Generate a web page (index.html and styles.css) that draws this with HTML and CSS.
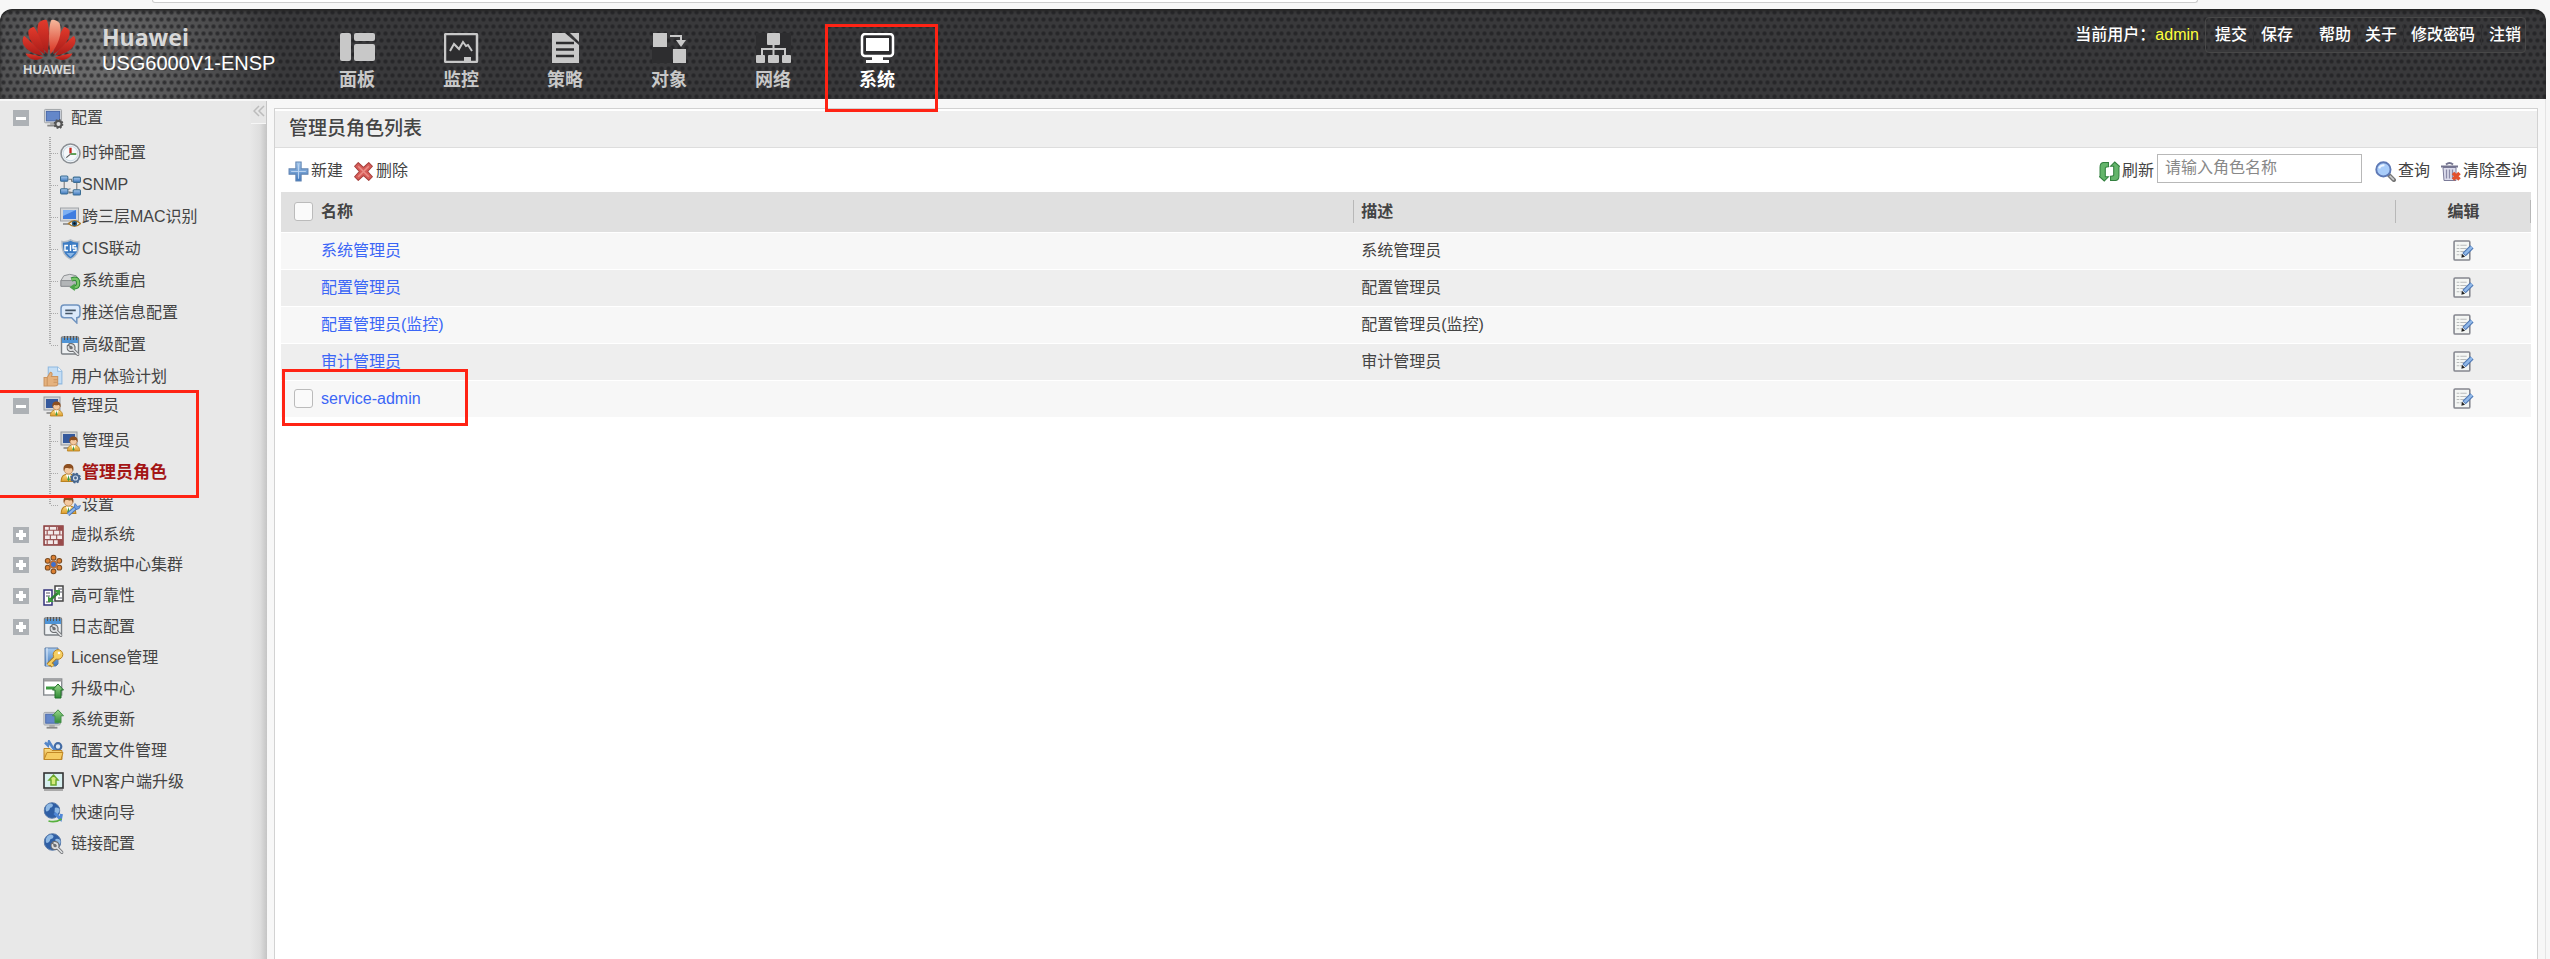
FILE: index.html
```html
<!DOCTYPE html>
<html lang="zh-CN">
<head>
    <meta charset="UTF-8">
    <meta name="viewport" content="width=device-width, initial-scale=1.0">
    <title>USG6000V1-ENSP</title>
    <link rel="stylesheet" href="styles.css">
</head>
<body>
    <!-- Icon sprite -->
    <svg class="sprite" aria-hidden="true">
        <defs>
            <linearGradient id="petal" x1="0" y1="0" x2="0" y2="1"><stop offset="0" stop-color="#e23a2c"/><stop offset="1" stop-color="#a81c18"/></linearGradient>
            <linearGradient id="petalLight" x1="0" y1="0" x2="0" y2="1"><stop offset="0" stop-color="#f6b89c"/><stop offset="1" stop-color="#d8301f"/></linearGradient>
            <linearGradient id="blue" x1="0" y1="0" x2="0" y2="1"><stop offset="0" stop-color="#a9cbee"/><stop offset="1" stop-color="#3f78bd"/></linearGradient>
            <linearGradient id="green" x1="0" y1="0" x2="0" y2="1"><stop offset="0" stop-color="#9bd98b"/><stop offset="1" stop-color="#2f8a35"/></linearGradient>
            <linearGradient id="gold" x1="0" y1="0" x2="0" y2="1"><stop offset="0" stop-color="#fbe08a"/><stop offset="1" stop-color="#dd9c2b"/></linearGradient>
        </defs>
        <symbol id="screen" viewBox="0 0 20 20">
            <rect x="1" y="1" width="18" height="14" rx="1" fill="#d9dbdd" stroke="#9da1a5"/>
            <rect x="3" y="3" width="14" height="10" fill="#6487c9" stroke="#4766a8"/>
            <path d="M7 15h6v2H7z" fill="#aaa"/><path d="M4 18h12" stroke="#888" stroke-width="2"/>
        </symbol>
        <symbol id="gear" viewBox="0 0 10 10">
            <circle cx="5" cy="5" r="3" fill="#ddd" stroke="#555" stroke-width="2"/>
            <circle cx="5" cy="5" r="4" fill="none" stroke="#555" stroke-width="2" stroke-dasharray="1.6 1.54"/>
        </symbol>
        <symbol id="wrench" viewBox="0 0 12 12">
            <path d="M10.500 10.500L6 6M3 1.500L5 3.500 3.500 5 1.500 3Q1 6 3.500 6.800 7.500 7.500 6.800 3.500 6 1 3 1.500z" fill="#d0d2d4" stroke="#6d6f72" stroke-width="3" stroke-linejoin="round" stroke-linecap="round"/>
            <path d="M10.500 10.500L6 6M1.800 3.500Q1.500 6 3.800 6.500 7 6.800 6.500 3.800 6 1.800 3.500 1.800" fill="none" stroke="#dcdee0" stroke-width="1.600" stroke-linecap="round"/>
        </symbol>
        <symbol id="person" viewBox="0 0 16 18">
            <path d="M1 17c0-5 3-7 7-7s7 2 7 7z" fill="url(#gold)" stroke="#b98222"/>
            <path d="M5.500 10.500L8 16l2.500-5.500z" fill="#fff"/><path d="M8 11l1 4-1 2-1-2z" fill="#3d9a45"/>
            <circle cx="8" cy="6" r="4" fill="#f4c9a0" stroke="#a86d35" stroke-width=".6"/>
            <path d="M3.500 7C2.500 2 5 .5 8 .5S13.500 2 12.500 7L11 4.500C8 5 5.500 4 5 4.500z" fill="#8d4f20"/>
        </symbol>
        <symbol id="i-config" viewBox="0 0 20 21"><use href="#screen" width="19" height="20"/><use href="#gear" x="10" y="11" width="10" height="10"/></symbol>
        <symbol id="i-clock" viewBox="0 0 20 20">
            <circle cx="10" cy="10" r="9" fill="#f5f8fa" stroke="#8a8f94" stroke-width="1.500"/>
            <circle cx="10" cy="10" r="7" fill="none" stroke="#cfdce6"/>
            <path d="M10 10V4.500" stroke="#c22820" stroke-width="2.200"/><path d="M10 10.500h5.500" stroke="#45913c" stroke-width="1.600"/><path d="M10 10.500L6 14" stroke="#555"/>
        </symbol>
        <symbol id="i-snmp" viewBox="0 0 20 20">
            <path d="M4 6v8M16 7v8M8 4h3v2h3M8 17h3M6 14l4-1M8 16l5 1" stroke="#777" fill="none"/>
            <g fill="url(#blue)" stroke="#3b6d93"><rect x=".5" y="1" width="7" height="5" rx="1"/><rect x="12.500" y="2" width="7" height="5" rx="1"/><rect x=".5" y="13" width="7" height="5" rx="1"/><rect x="12.500" y="14" width="7" height="5" rx="1"/></g>
        </symbol>
        <symbol id="i-mac" viewBox="0 0 21 21">
            <rect x=".5" y="1" width="18" height="13" fill="#d5d7da" stroke="#a0a3a7"/><rect x="3" y="3" width="13" height="9" fill="#3f7de0"/><path d="M3 3h13L3 9z" fill="#7db0f3"/>
            <path d="M3 17h7" stroke="#999" stroke-width="2"/>
            <path d="M8.500 16.500Q14.500 11 20.500 16.500 14.500 22 8.500 16.500z" fill="#fff" stroke="#ad7c2c" stroke-width="1.500"/><circle cx="14.500" cy="16.500" r="2.700" fill="#2c5f84"/><circle cx="14.500" cy="16.500" r="1.200" fill="#111"/>
        </symbol>
        <symbol id="i-shield" viewBox="0 0 20 21">
            <path d="M10 .8C7.500 2.500 4 3 1.500 2.500c0 8 1 14 8.500 17.700C17.500 16.500 18.500 10.500 18.500 2.500 16 3 12.500 2.500 10 .8z" fill="#3c7cc4" stroke="#b3bcc6" stroke-width="1.500"/>
            <path d="M7.500 6.500H4.500v5h3M10 6v6M15.500 6.500h-3v2.500h3v2.500h-3" fill="none" stroke="#fff" stroke-width="1.400"/><path d="M6 14h8l-4 4z" fill="#8db8e6"/>
        </symbol>
        <symbol id="i-restart" viewBox="0 0 22 20">
            <path d="M1 9l3-5q6-3 13 0l3 5v6H1z" fill="#d8d9da" stroke="#8b8e91"/><path d="M1 9h18v6H1z" fill="#b2b5b7" stroke="#8b8e91"/>
            <path d="M12 8q7-3 7 4 0 4-4 4" fill="none" stroke="#2e8436" stroke-width="4.500"/><path d="M12 8q7-3 7 4 0 4-4 4" fill="none" stroke="#76c566" stroke-width="2.500"/><path d="M15.500 12v8L10 16z" fill="#4aa348"/>
        </symbol>
        <symbol id="i-message" viewBox="0 0 20 20">
            <path d="M4 2h12q3 0 3 3v6q0 3-3 3v5l-5-5H4q-3 0-3-3V5q0-3 3-3z" fill="#dceafb" stroke="#6f93bf" stroke-width="1.400"/><path d="M5 7h10M5 10h7" stroke="#456" stroke-width="1.600"/>
        </symbol>
        <symbol id="i-advanced" viewBox="0 0 20 21">
            <rect x="1" y="2" width="17" height="17" rx="1" fill="#eef1f3" stroke="#7a7f84" stroke-width="1.400"/><path d="M1.500 3h16v5h-16z" fill="#4f94d6"/><path d="M4 1v4M7 1v4M10 1v4M13 1v4M16 1v4" stroke="#555"/>
            <use href="#wrench" x="6" y="8" width="13" height="13"/>
        </symbol>
        <symbol id="i-thumb" viewBox="0 0 20 20">
            <path d="M5 1h9l4 4v12H5z" fill="#c4def5" stroke="#8eb8df"/><path d="M14 1v4h4" fill="#fff" stroke="#8eb8df"/>
            <path d="M1 11h3l3-5c2 0 2 2 1 4h6v8q-1 1-3 1H1z" fill="#e5b27e" stroke="#cb9460"/><path d="M4 11v8M10 13h4M10 15.500h4" stroke="#cb9460"/>
        </symbol>
        <symbol id="i-admin" viewBox="0 0 20 21">
            <rect x=".5" y="1" width="16" height="13" fill="#d4d6d9" stroke="#94989d"/><rect x="2.500" y="3" width="12" height="9" fill="#35599d"/><path d="M3 17h7" stroke="#999" stroke-width="2"/>
            <use href="#person" x="6" y="5" width="14" height="16"/>
        </symbol>
        <symbol id="i-role" viewBox="0 0 21 20">
            <use href="#person" x="0" y="0" width="17" height="19"/>
            <circle cx="15.500" cy="14.500" r="3.600" fill="#cfdcec" stroke="#47678f" stroke-width="2"/><circle cx="15.500" cy="14.500" r="4.700" fill="none" stroke="#47678f" stroke-width="1.400" stroke-dasharray="2 1.690"/><circle cx="15.500" cy="14.500" r="1.400" fill="#47678f"/>
        </symbol>
        <symbol id="i-setting" viewBox="0 0 21 20">
            <use href="#person" x="0" y="0" width="17" height="19"/>
            <path d="M8 19l8-7" stroke="#4474bd" stroke-width="4"/><path d="M8 19l8-7" stroke="#8fb7ea" stroke-width="2"/><path d="M15 8q-2 4 1 6 4 0 4.500-4l-3 1z" fill="#6d9ce0" stroke="#4474bd" stroke-width=".8"/>
        </symbol>
        <symbol id="i-wall" viewBox="0 0 20 20">
            <rect x="1" y="1" width="18" height="18" fill="#f3eaea" stroke="#8b3d3d" stroke-width="1.500"/>
            <path d="M1 5h18M1 9.500h18M1 14h18M6 1v4M13 1v4M4 5v4.500M10 5v4.500M16 5v4.500M7 9.500V14M13 9.500V14M4 14v5M10 14v5M16 14v5" stroke="#9a5555" stroke-width="1.100"/><path d="M14 14h5v5h-5zM14 1h5v4h-5z" fill="#9a4b4b"/>
        </symbol>
        <symbol id="i-cluster" viewBox="0 0 20 20">
            <g fill="#dd8031" stroke="#7a4a20"><circle cx="10" cy="3.500" r="2.300"/><circle cx="15.500" cy="6.500" r="2.300"/><circle cx="15.500" cy="13" r="2.300"/><circle cx="10" cy="16.500" r="2.300"/><circle cx="4.500" cy="13" r="2.300"/><circle cx="4.500" cy="6.500" r="2.300"/></g>
            <circle cx="10" cy="10" r="4" fill="#b9703a"/><circle cx="10" cy="10" r="2.300" fill="#3d6fd0"/>
        </symbol>
        <symbol id="i-ha" viewBox="0 0 21 21">
            <path d="M1 5h8v15H1z" fill="#fff" stroke="#33337c" stroke-width="1.500"/><path d="M12 1h8v15h-8z" fill="#fff" stroke="#444" stroke-width="1.500"/>
            <path d="M3 8h4M3 11h4M3 17h4M15 4h4M15 7h4M15 13h4" stroke="#556"/><path d="M7 15l8-7" stroke="#2d8232" stroke-width="2.500"/><path d="M11 5h6v6zM5 11v6h6z" fill="#3d9c3d"/>
        </symbol>
        <symbol id="i-license" viewBox="0 0 21 21">
            <path d="M2 1h13v16l-2 2H2z" fill="url(#blue)" stroke="#5c7fa9"/><path d="M4 1v18" stroke="#e5eefa"/>
            <path d="M5 18l8-8M7 16l3 3" stroke="#a87820" stroke-width="4"/><circle cx="15" cy="7.500" r="4.800" fill="#f6cf62" stroke="#b98222"/><path d="M5 18l8-8M7 16l3 3" stroke="#f6cf62" stroke-width="2.400"/><circle cx="16" cy="6" r="1.300" fill="#fff"/>
        </symbol>
        <symbol id="i-upgrade" viewBox="0 0 21 21">
            <rect x=".7" y="1" width="18" height="16" fill="#fff" stroke="#888c90" stroke-width="1.400"/><path d="M1 2.500h18" stroke="#999" stroke-width="2"/><path d="M3 10h10" stroke="#3d9b3f" stroke-width="3"/>
            <path d="M15 6l5.500 6H18v8h-6v-8H9.500z" fill="url(#green)" stroke="#23702b"/>
        </symbol>
        <symbol id="i-update" viewBox="0 0 21 21">
            <use href="#screen" y="2" width="18" height="19"/><path d="M15 .8l5.500 6H18v7h-6v-7H9.500z" fill="url(#green)" stroke="#47904a"/>
        </symbol>
        <symbol id="i-folder" viewBox="0 0 21 20">
            <circle cx="15" cy="6" r="3.300" fill="#dde8f5" stroke="#436ba3" stroke-width="2.200"/><path d="M2 2l3 3 1-4 3 5 3 4" stroke="#5486c9" stroke-width="2.500" fill="none"/>
            <path d="M1 8h6l2 2h10v9H1z" fill="url(#gold)" stroke="#c08726"/><path d="M4 12h16l-2 7H1z" fill="#f5cb62" stroke="#c08726"/>
        </symbol>
        <symbol id="i-vpn" viewBox="0 0 21 20">
            <rect x="1" y="1.500" width="19" height="15" fill="#d8f0ef" stroke="#333" stroke-width="1.600"/><path d="M1 18.500h19" stroke="#aaa" stroke-width="2"/>
            <path d="M10.500 3.500l4.500 5h-2v5H8v-5H6z" fill="#d5ea7c" stroke="#6aa82c" stroke-width="1.500"/>
        </symbol>
        <symbol id="globe" viewBox="0 0 18 18">
            <circle cx="9" cy="9" r="8.300" fill="#2f5fa5" stroke="#5c7ca9"/><path d="M4 3q4-3 6 0 0 3-3 3-1 4-4 4-2-3 1-7zM12 6q4-1 5 2 0 4-4 6-2-4-1-8z" fill="#8fb9e4"/>
        </symbol>
        <symbol id="i-wizard" viewBox="0 0 20 21"><use href="#globe" width="17" height="17"/><path d="M11 11l6 6 1-5" fill="none" stroke="#4f87d6" stroke-width="3"/><path d="M5 19q7 2 13-2" fill="none" stroke="#57b13e" stroke-width="1.800"/></symbol>
        <symbol id="i-link" viewBox="0 0 20 21"><use href="#globe" width="18" height="18"/><use href="#wrench" x="7" y="8" width="13" height="13"/></symbol>
        <symbol id="i-add" viewBox="0 0 20 20"><path d="M7.500 1h5v6.500H19v5h-6.500V19h-5v-6.500H1v-5h6.500z" fill="url(#blue)" stroke="#6285b3"/><path d="M10 3v14M3 10h14" stroke="#b9d2ef"/></symbol>
        <symbol id="i-delete" viewBox="0 0 20 20"><path d="M5 1.500l5 4.500 5-4.500L18.500 5 14 10l4.500 5-3.500 3.500-5-4.500-5 4.500L1.500 15 6 10 1.500 5z" fill="#d75c58" stroke="#a4413d" stroke-linejoin="round"/><path d="M5 5l10 10M15 5L5 15" stroke="#ea8d86" stroke-width="1.500"/></symbol>
        <symbol id="i-refresh" viewBox="0 0 20 20"><g fill="#64b56b" stroke="#338040"><path d="M9 1.500H4Q1 2 1 6v8l-.5 1L5 19l4-4H6V7q0-1.500 3-1.500z"/><path d="M11 18.500h5q3-.5 3-4.500V6l.5-1L15 1l-4 4h3v8q0 1.500-3 1.500z"/></g></symbol>
        <symbol id="i-search" viewBox="0 0 20 20"><path d="M13 13l5 5" stroke="#777" stroke-width="4" stroke-linecap="round"/><path d="M14 14l4 4" stroke="#ccc" stroke-width="1.500"/><circle cx="8" cy="8" r="6.800" fill="#a9cdfa" stroke="#5e79b5" stroke-width="1.800"/><path d="M4 7q1-3 5-3" stroke="#eef6ff" stroke-width="2" fill="none"/></symbol>
        <symbol id="i-trash" viewBox="0 0 21 20"><path d="M3 6h13v13H4z" fill="#dcdcec" stroke="#7b7b99"/><path d="M6.500 8v9M9.500 8v9M12.500 8v9" stroke="#8b8ba8" stroke-width="1.300"/><path d="M1 5h17M6 3q3.500-3 7 0" stroke="#74748f" stroke-width="2" fill="none"/><path d="M13 11.500l6.500 6.500M19.500 11.500L13 18" stroke="#e2502c" stroke-width="3.500"/></symbol>
        <symbol id="i-edit" viewBox="0 0 20 20"><rect x="1" y="1" width="15" height="18" rx="1" fill="#f4f6f4" stroke="#85878f" stroke-width="1.500"/><path d="M3.500 5H6M3.500 8H6M3.500 11H6M3.500 14H6M7 5h6M7 8h6M7 11h4M7 14h2" stroke="#b9bcbc"/><path d="M18 6.500L10.500 14" stroke="#4c76b3" stroke-width="4.500"/><path d="M18 6.500L11 13.500" stroke="#90b8e8" stroke-width="2.500"/><path d="M8.500 13l3 3-3.500 1z" fill="#222"/></symbol>
    </svg>

    <div class="browser-strip"><div class="address-bar"></div></div>

    <header class="header">
        <div class="brand">
            <div class="brand-logo">
                <svg class="flower" viewBox="0 0 54 42" aria-hidden="true">
                    <g fill="url(#petal)">
                        <path d="M25.500 35C18 27 13 13 16.500 4 20 .5 24 0 25 1.500c3 8 2 25 .5 33.500z"/>
                        <path d="M23 35C14 31 5 20 6.500 11.500 8 9 11 7.500 12 8c4 5 9 18 11 27z"/>
                        <path d="M31 35C40 31 49 20 47.500 11.500 46 9 43 7.500 42 8c-4 5-9 18-11 27z"/>
                        <path d="M21 36.500C12 36 1 30 .5 22c0-3 1-5 2-5C8 22 17 30 21 36.500z"/>
                        <path d="M33 36.500c9-.5 20-6.500 20.500-14.500 0-3-1-5-2-5C46 22 37 30 33 36.500z"/>
                        <path d="M21 38.500C15 43 7 41 3.500 34.500c6 .5 13 2 17.500 4z"/>
                        <path d="M33 38.500c6 4.500 14 2.500 17.500-4-6 .5-13 2-17.500 4z"/>
                    </g>
                    <path d="M28.500 35C36 27 41 13 37.500 4 34 .5 30 0 29 1.500c-3 8-2 25-.5 33.500z" fill="url(#petalLight)"/>
                </svg>
                <span class="brand-word">HUAWEI</span>
            </div>
            <div class="brand-text">
                <strong>Huawei</strong>
                <span>USG6000V1-ENSP</span>
            </div>
        </div>

        <nav class="main-nav">
            <a href="#">
                <svg viewBox="0 0 35 30"><g fill="currentColor"><rect width="11" height="28" rx="2"/><rect x="14" width="21" height="8" rx="2"/><rect x="14" y="11" width="21" height="17" rx="2"/></g></svg>
                面板
            </a>
            <a href="#">
                <svg viewBox="0 0 35 30"><rect x="1" y="1" width="32" height="28" rx="1" fill="#2d2d2f" stroke="currentColor" stroke-width="2.500"/><path d="M6 18l4-7 5 5 4-7 3 4 2-1 4 6" fill="none" stroke="currentColor" stroke-width="2"/><path d="M20 24h7v4h-7z" fill="currentColor"/></svg>
                监控
            </a>
            <a href="#">
                <svg viewBox="0 0 35 30"><path d="M4 0h13l14 12v18H4z" fill="currentColor"/><path d="M22 0h9v9z" fill="currentColor"/><path d="M8 10h18M8 16.500h18M8 23h18" stroke="#2d2d2f" stroke-width="2.500"/></svg>
                策略
            </a>
            <a href="#">
                <svg viewBox="0 0 35 30"><path d="M0 14h20v16H0z" fill="#2d2d2f"/><path d="M1 0h14v14H1zM21 16h13v14H21z" fill="currentColor"/><path d="M18 3h11v6" fill="none" stroke="currentColor" stroke-width="2"/><path d="M24 7h10l-5 7z" fill="currentColor"/></svg>
                对象
            </a>
            <a href="#">
                <svg viewBox="0 0 35 30"><path d="M0 0h35v30H0z" fill="#2d2d2f"/><g fill="currentColor"><rect x="11" width="13" height="12" rx="1"/><rect y="22" width="9" height="8" rx="1"/><rect x="12" y="22" width="11" height="8" rx="1"/><rect x="26" y="22" width="9" height="8" rx="1"/></g><path d="M17.500 12v10M6 22v-6h23v6" fill="none" stroke="currentColor" stroke-width="2"/></svg>
                网络
            </a>
            <a href="#" class="active">
                <svg viewBox="0 0 35 30"><rect x="2" y="1" width="31" height="22" rx="3" fill="#2d2d2f" stroke="currentColor" stroke-width="2.500"/><path d="M6 5h23v13H6zM12 23h11v4h6v3H6v-3h6z" fill="currentColor"/></svg>
                系统
                <span class="mark mark-nav"></span>
            </a>
        </nav>

        <div class="user-bar">
            <span>当前用户：<span class="user-name">admin</span></span>
            <div class="user-links">
                <a href="#">提交</a>
                <a href="#" class="group-end">保存</a>
                <a href="#">帮助</a>
                <a href="#">关于</a>
                <a href="#">修改密码</a>
                <a href="#">注销</a>
            </div>
        </div>
    </header>

    <div class="layout">
        <aside class="sidebar">
            <button class="collapse" type="button" aria-label="收起"><svg viewBox="0 0 12 12"><path d="M6 1L1 6l5 5M11 1L6 6l5 5" fill="none" stroke="#bcbcbc" stroke-width="1.500"/></svg></button>
            <ul class="tree">
                <li>
                    <div class="row row-tight"><button class="toggle" type="button" aria-label="折叠"></button><svg class="icon"><use href="#i-config"/></svg><a href="#">配置</a></div>
                    <ul class="subtree">
                        <li><svg class="icon"><use href="#i-clock"/></svg><a href="#">时钟配置</a></li>
                        <li><svg class="icon"><use href="#i-snmp"/></svg><a href="#">SNMP</a></li>
                        <li><svg class="icon"><use href="#i-mac"/></svg><a href="#">跨三层MAC识别</a></li>
                        <li><svg class="icon"><use href="#i-shield"/></svg><a href="#">CIS联动</a></li>
                        <li><svg class="icon"><use href="#i-restart"/></svg><a href="#">系统重启</a></li>
                        <li><svg class="icon"><use href="#i-message"/></svg><a href="#">推送信息配置</a></li>
                        <li><svg class="icon"><use href="#i-advanced"/></svg><a href="#">高级配置</a></li>
                    </ul>
                </li>
                <li class="row"><svg class="icon"><use href="#i-thumb"/></svg><a href="#">用户体验计划</a></li>
                <li class="marked">
                    <div class="row row-tight"><button class="toggle" type="button" aria-label="折叠"></button><svg class="icon"><use href="#i-admin"/></svg><a href="#">管理员</a></div>
                    <ul class="subtree">
                        <li><svg class="icon"><use href="#i-admin"/></svg><a href="#">管理员</a></li>
                        <li class="current"><svg class="icon"><use href="#i-role"/></svg><a href="#">管理员角色</a></li>
                        <li><svg class="icon"><use href="#i-setting"/></svg><a href="#">设置</a></li>
                    </ul>
                    <span class="mark mark-tree"></span>
                </li>
                <li class="row row-tight"><button class="toggle closed" type="button" aria-label="展开"></button><svg class="icon"><use href="#i-wall"/></svg><a href="#">虚拟系统</a></li>
                <li class="row"><button class="toggle closed" type="button" aria-label="展开"></button><svg class="icon"><use href="#i-cluster"/></svg><a href="#">跨数据中心集群</a></li>
                <li class="row"><button class="toggle closed" type="button" aria-label="展开"></button><svg class="icon"><use href="#i-ha"/></svg><a href="#">高可靠性</a></li>
                <li class="row"><button class="toggle closed" type="button" aria-label="展开"></button><svg class="icon"><use href="#i-advanced"/></svg><a href="#">日志配置</a></li>
                <li class="row"><svg class="icon"><use href="#i-license"/></svg><a href="#">License管理</a></li>
                <li class="row"><svg class="icon"><use href="#i-upgrade"/></svg><a href="#">升级中心</a></li>
                <li class="row"><svg class="icon"><use href="#i-update"/></svg><a href="#">系统更新</a></li>
                <li class="row"><svg class="icon"><use href="#i-folder"/></svg><a href="#">配置文件管理</a></li>
                <li class="row"><svg class="icon"><use href="#i-vpn"/></svg><a href="#">VPN客户端升级</a></li>
                <li class="row"><svg class="icon"><use href="#i-wizard"/></svg><a href="#">快速向导</a></li>
                <li class="row"><svg class="icon"><use href="#i-link"/></svg><a href="#">链接配置</a></li>
            </ul>
        </aside>

        <main class="panel">
            <h1 class="panel-title">管理员角色列表</h1>
            <div class="toolbar">
                <button type="button"><svg class="icon"><use href="#i-add"/></svg>新建</button>
                <button type="button"><svg class="icon"><use href="#i-delete"/></svg>删除</button>
                <button type="button" class="refresh"><svg class="icon"><use href="#i-refresh"/></svg>刷新</button>
                <input class="search" type="text" placeholder="请输入角色名称" aria-label="角色名称">
                <button type="button"><svg class="icon"><use href="#i-search"/></svg>查询</button>
                <button type="button"><svg class="icon"><use href="#i-trash"/></svg>清除查询</button>
            </div>
            <table class="roles">
                <thead>
                    <tr>
                        <th class="col-check"><input type="checkbox" aria-label="全选"></th>
                        <th class="col-name">名称</th>
                        <th class="col-desc">描述</th>
                        <th class="col-edit">编辑</th>
                    </tr>
                </thead>
                <tbody>
                    <tr><td></td><td><a href="#">系统管理员</a></td><td class="desc">系统管理员</td><td class="edit"><button type="button" aria-label="编辑"><svg class="icon"><use href="#i-edit"/></svg></button></td></tr>
                    <tr><td></td><td><a href="#">配置管理员</a></td><td class="desc">配置管理员</td><td class="edit"><button type="button" aria-label="编辑"><svg class="icon"><use href="#i-edit"/></svg></button></td></tr>
                    <tr><td></td><td><a href="#">配置管理员(监控)</a></td><td class="desc">配置管理员(监控)</td><td class="edit"><button type="button" aria-label="编辑"><svg class="icon"><use href="#i-edit"/></svg></button></td></tr>
                    <tr><td></td><td><a href="#">审计管理员</a></td><td class="desc">审计管理员</td><td class="edit"><button type="button" aria-label="编辑"><svg class="icon"><use href="#i-edit"/></svg></button></td></tr>
                    <tr><td class="marked"><input type="checkbox" aria-label="service-admin"><span class="mark mark-row"></span></td><td><a href="#">service-admin</a></td><td class="desc"></td><td class="edit"><button type="button" aria-label="编辑"><svg class="icon"><use href="#i-edit"/></svg></button></td></tr>
                </tbody>
            </table>
        </main>
    </div>
</body>
</html>
```
FILE: styles.css
```css
:root {
    --text: #444;
    --link: #3b66f6;
    --line: #d2d2d2;
    --page: #f7f7f7;
    --mark: #ff2314;
}
* { box-sizing: border-box; }
body {
    margin: 0;
    min-height: 100vh;
    display: flex;
    flex-direction: column;
    background: var(--page);
    color: var(--text);
    font: 16px/20px "Liberation Sans", "Noto Sans CJK SC", sans-serif;
}
a { color: inherit; text-decoration: none; }
ul { list-style: none; margin: 0; padding: 0; }
button { font: inherit; color: inherit; background: none; border: 0; padding: 0; cursor: pointer; }
.sprite { position: absolute; width: 0; height: 0; }
.icon { width: 21px; height: 21px; flex: none; }

/* top strip */
.browser-strip { height: 9px; padding: 0 352px 0 152px; }
.address-bar { height: 3px; background: #fff; border: 1px solid #ccc; border-top: 0; border-radius: 0 0 12px 12px; }

/* header */
.header {
    display: flex;
    height: 90px;
    margin-right: 4px;
    border-radius: 12px 12px 0 0;
    color: #d8d8d8;
    background:
        radial-gradient(circle at 50% 25%, rgba(30, 30, 32, .7) 1px, transparent 3px) 0 0 / 7px 14px,
        radial-gradient(circle at 50% 25%, rgba(30, 30, 32, .7) 1px, transparent 3px) 4px 7px / 7px 14px,
        radial-gradient(ellipse 180px 160px at 100px 50px, #707070 0, #39393b 100%);
    box-shadow: inset 0 2px 3px #222;
}
.brand { display: flex; width: 305px; padding: 10px 0 0 22px; flex: none; }
.brand-logo { width: 54px; margin-right: 26px; text-align: center; }
.flower { display: block; width: 54px; height: 42px; }
.brand-word { display: block; font: bold 13px/18px "Liberation Sans", sans-serif; }
.brand-text { display: flex; flex-direction: column; padding-top: 4px; white-space: nowrap; }
.brand-text strong { font: bold 23px/28px "Open Sans", sans-serif; }
.brand-text span { font-size: 20px; line-height: 24px; color: #fff; }
.main-nav { display: flex; }
.main-nav a {
    position: relative;
    display: flex;
    flex-direction: column;
    align-items: center;
    gap: 4px;
    width: 104px;
    padding-top: 24px;
    font-size: 18px;
    line-height: 26px;
    font-weight: bold;
    color: #c8c8c8;
}
.main-nav svg { width: 35px; height: 30px; }
.main-nav .active { color: #fff; }
.user-bar { display: flex; align-items: center; gap: 6px; height: 36px; margin: 8px 20px 0 auto; color: #fff; font-weight: 500; }
.user-name { color: #ffff3c; font-weight: normal; }
.user-links { display: flex; align-items: center; height: 36px; padding: 0 3px 0 2px; border: 1px solid #484848; border-radius: 4px; }
.user-links a { padding: 0 6px 0 7px; border-right: 1px solid #303032; }
.user-links a:last-child { border: 0; padding-right: 1px; }
.user-links .group-end { margin-right: 12px; }

/* red frames */
.marked { position: relative; }
.mark { position: absolute; border: 3px solid var(--mark); pointer-events: none; }
.mark-nav { top: 15px; left: 0; width: 113px; height: 88px; }
.mark-tree { top: -2px; left: -3px; width: 202px; height: 108px; }
.mark-row { top: -12px; left: 1px; width: 186px; height: 57px; z-index: 1; }

/* layout */
.layout { flex: 1; display: flex; margin-right: 4px; padding-top: 2px; border-right: 1px solid #e4e4e4; }
.sidebar {
    position: relative;
    width: 267px;
    flex: none;
    padding-top: 3px;
    background: linear-gradient(90deg, #e8e8e8 250px, #dedede 260px, #c4c4c4);
}
.collapse { position: absolute; top: 0; right: 1px; width: 15px; height: 23px; background: #e6e6e6; border-bottom: 1px solid #f6f6f6; }
.collapse svg { width: 12px; height: 12px; }
.row { display: flex; align-items: center; gap: 7px; height: 31px; padding-left: 43px; }
.row-tight { height: 28px; }
.toggle { width: 16px; height: 16px; margin-left: -30px; margin-right: 7px; background: linear-gradient(#fff, #fff) center / 10px 3px no-repeat #adb1b5; }
.closed { background: linear-gradient(#fff, #fff) center / 10px 4px no-repeat, linear-gradient(#fff, #fff) center / 4px 10px no-repeat #adb1b5; }
.subtree { padding-top: 5px; }
.subtree li {
    display: flex;
    align-items: center;
    gap: 1px;
    height: 32px;
    padding-left: 60px;
    background:
        repeating-linear-gradient(#aaa 0 1px, transparent 1px 2px) 49px 0 / 2px 100% no-repeat,
        repeating-linear-gradient(90deg, #aaa 0 1px, transparent 1px 2px) 51px 50% / 8px 1px no-repeat;
}
.subtree li:last-child { background-size: 2px 50%, 8px 1px; }
.subtree .current { color: #a31515; font-size: 17px; font-weight: bold; }

/* panel */
.panel { flex: 1; margin: 7px 7px 0 7px; padding-top: 2px; background: #fff; border: 1px solid var(--line); border-bottom: 0; }
.panel-title { margin: 0; padding: 0 14px; font-size: 19px; line-height: 36px; font-weight: 500; background: #efefef; border-bottom: 1px solid #ddd; }
.toolbar { display: flex; align-items: center; height: 44px; padding: 2px 10px 0 13px; gap: 10px; }
.toolbar button { display: flex; align-items: center; gap: 2px; }
.refresh { margin-left: auto; }
.search { width: 205px; height: 29px; padding: 0 7px; margin: 0 3px 6px -7px; font: inherit; color: var(--text); border: 1px solid #b8b8b8; }
.search::placeholder { color: #888; }
.roles { width: calc(100% - 12px); margin-left: 6px; border-collapse: collapse; table-layout: fixed; }
.roles th {
    height: 40px;
    padding: 0;
    text-align: left;
    background: linear-gradient(#b8b8b8, #b8b8b8) right center / 1px 23px no-repeat #e0e0e0;
}
.roles td { height: 37px; padding: 0; border-top: 1px solid #fff; background: #f7f7f7; }
.roles tr:nth-child(even) td { background: #eee; }
.roles a { color: var(--link); }
.roles .col-check { width: 40px; background: #e0e0e0; }
.col-desc { width: 46.3%; }
.roles .col-desc, .roles .desc { padding-left: 7px; }
.col-edit { width: 6%; }
.roles .col-edit, .edit { text-align: center; }
.edit button, .edit svg { display: block; margin: 0 auto; }
.roles input {
    appearance: none;
    display: block;
    width: 19px;
    height: 19px;
    margin: 0 0 0 13px;
    background: #fafafa;
    border: 1px solid #bbb;
    border-radius: 3px;
}
```
